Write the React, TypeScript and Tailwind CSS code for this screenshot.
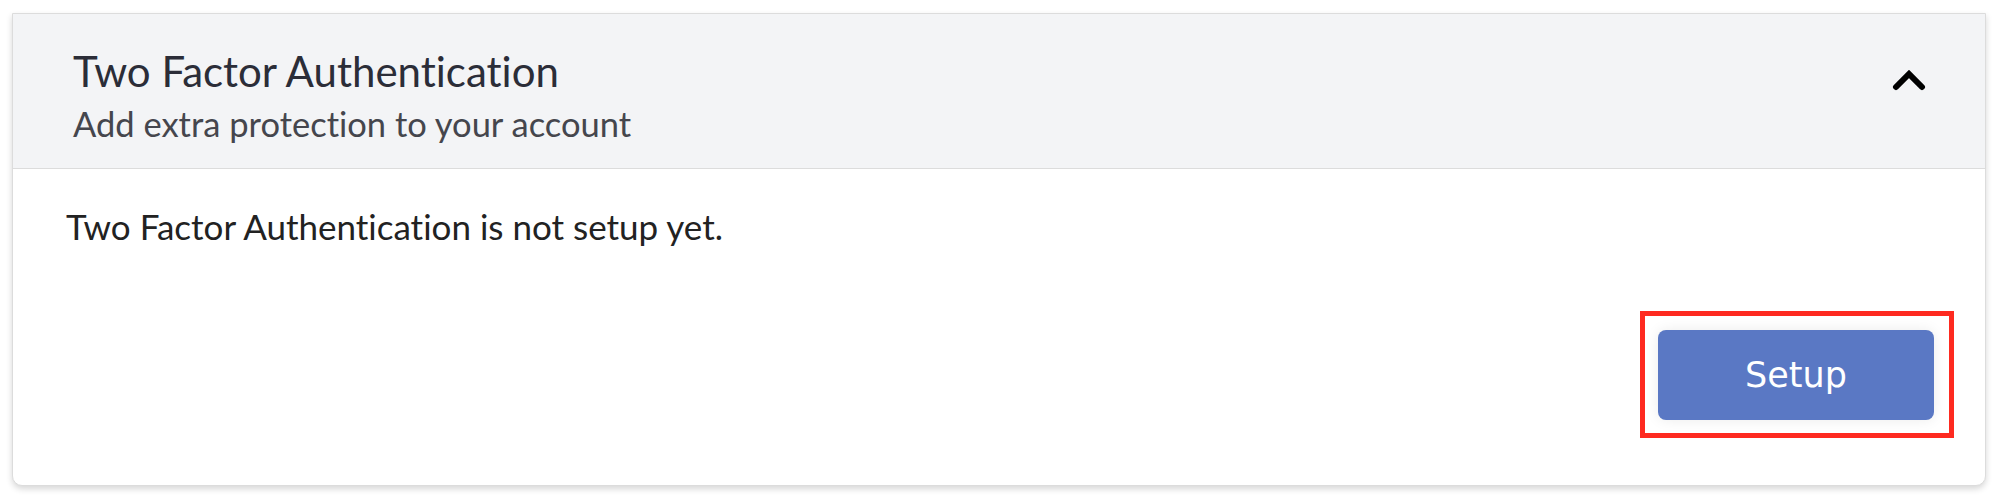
export default function App() {
  return (
    <div className="min-h-screen bg-white pt-[13px] pl-[12px]">
      <div
        className="w-[1974px] rounded-b-[10px] border border-[#dcdcdc] bg-white shadow-[0_3px_6px_rgba(0,0,0,0.16)] [font-variant-ligatures:none]"
        style={{ fontFamily: "Lato, 'Noto Sans', sans-serif" }}
      >
        {/* header */}
        <div className="flex items-center justify-between border-b border-[#dcdcdc] bg-[#f3f4f6] pl-[60px] pr-[59px] pt-[33px] pb-[25px]">
          <div className="flex flex-col">
            <h2 className="text-[42px] leading-[48px] text-[#2b2d38]">Two Factor Authentication</h2>
            <p className="mt-[10px] text-[34.5px] leading-[38px] text-[#45464d]">
              Add extra protection to your account
            </p>
          </div>
          <button className="mt-[-30px]">
            <svg width="34" height="22" viewBox="0 0 34 22" fill="none">
              <polyline
                points="4,18 17,5 30,18"
                stroke="#000"
                strokeWidth="6"
                strokeLinecap="round"
                strokeLinejoin="miter"
              />
            </svg>
          </button>
        </div>

        {/* body */}
        <div className="flex flex-col pl-[53px] pr-[31px] pt-[38px] pb-[47px]">
          <p className="text-[35px] leading-[38px] text-[#222]">
            Two Factor Authentication is not setup yet.
          </p>
          <div className="mt-[66px] flex justify-end">
            <div className="border-[5px] border-[#fe2a20] p-[13px] pr-[15px] pt-[14px]">
              <button
                className="h-[90px] w-[276px] rounded-[8px] bg-[#5a78c4] text-[35px] text-white shadow-[0_0_14px_rgba(0,0,0,0.08)]"
                style={{ fontFamily: "'DejaVu Sans', sans-serif" }}
              >
                Setup
              </button>
            </div>
          </div>
        </div>
      </div>
    </div>
  );
}
